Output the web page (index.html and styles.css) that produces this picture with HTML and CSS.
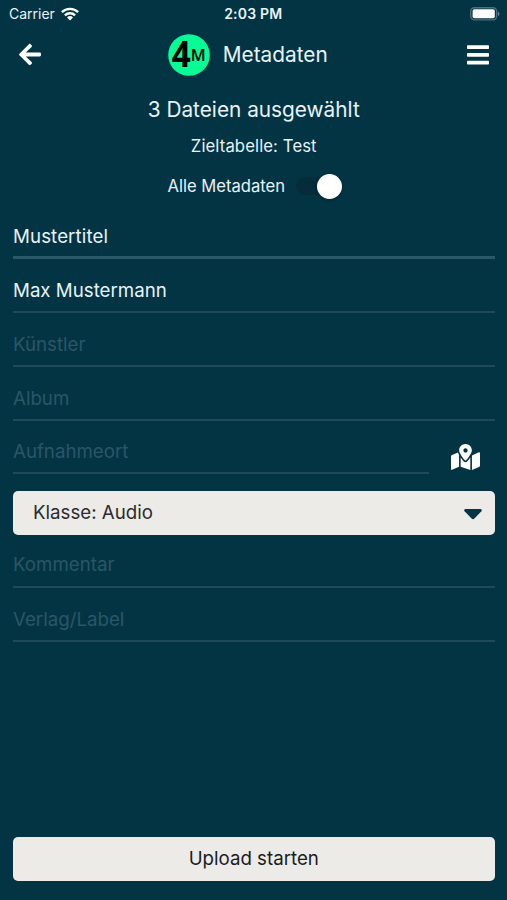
FILE: index.html
```html
<!DOCTYPE html>
<html lang="de">
<head>
<meta charset="utf-8">
<title>Metadaten</title>
<link rel="stylesheet" href="styles.css">
</head>
<body>
<div class="status">
  <div class="carrier"><span>Carrier</span>
    <svg width="18" height="14" viewBox="0 0 18 14"><g fill="none" stroke="#fff" stroke-width="2.4"><path d="M.9 5.2a11.5 11.5 0 0 1 16.2 0"/><path d="M3.9 8.4a7.2 7.2 0 0 1 10.2 0"/></g><path fill="#fff" d="M9 13.6 6 10.5a4.3 4.3 0 0 1 6 0z"/></svg>
  </div>
  <span class="time">2:03 PM</span>
  <svg class="battery" width="31" height="14" viewBox="0 0 31 14"><rect x="1.7" y=".7" width="26" height="12.2" rx="3.8" fill="none" stroke="#4c6f7d" stroke-width="1.4"/><rect x="3.6" y="2.3" width="22.2" height="9" rx="1.8" fill="#fff"/><path d="M29 4.4q3 2.4 0 4.8z" fill="#668692"/></svg>
</div>
<header class="header">
  <svg class="back" width="22" height="25" viewBox="0 0 448 512"><path fill="#fff" d="M257.5 445.1l-22.2 22.2c-9.4 9.4-24.6 9.4-33.9 0L7 273c-9.4-9.4-9.4-24.6 0-33.9L201.4 44.7c9.4-9.4 24.6-9.4 33.9 0l22.2 22.2c9.5 9.5 9.3 25-.4 34.3L136.6 216H424c13.3 0 24 10.7 24 24v32c0 13.3-10.7 24-24 24H136.6l120.5 114.8c9.8 9.3 10 24.8.4 34.3z"/></svg>
  <div class="brand">
    <svg class="logo" width="42" height="42" viewBox="0 0 42 42"><circle cx="21" cy="21" r="20.8" fill="#09fb96"/><text class="four" x="3.8" y="33" textLength="19" lengthAdjust="spacingAndGlyphs">4</text><text class="em" x="22.8" y="27.4" textLength="15" lengthAdjust="spacingAndGlyphs">M</text></svg>
    <h1>Metadaten</h1>
  </div>
  <svg class="menu" width="22" height="20" viewBox="0 0 22 20"><g fill="#fff"><rect width="22" height="3.8" y=".2" rx=".8"/><rect width="22" height="3.8" y="8" rx=".8"/><rect width="22" height="3.8" y="15.8" rx=".8"/></g></svg>
</header>
<main>
  <h2>3 Dateien ausgewählt</h2>
  <p class="target">Zieltabelle: Test</p>
  <div class="toggle-row"><span>Alle Metadaten</span><span class="toggle"><span class="knob"></span></span></div>
  <form class="form">
    <div class="field focused">Mustertitel</div>
    <div class="field filled">Max Mustermann</div>
    <div class="field">Künstler</div>
    <div class="field">Album</div>
    <div class="place">
      <div class="field">Aufnahmeort</div>
      <svg width="29" height="26" viewBox="0 0 576 512"><path fill="#fff" d="M288 0c-69.59 0-126 56.41-126 126 0 56.26 82.35 158.8 113.9 196.02 6.39 7.54 17.82 7.54 24.2 0C331.65 284.8 414 182.26 414 126 414 56.41 357.59 0 288 0zm0 168c-23.2 0-42-18.8-42-42s18.8-42 42-42 42 18.8 42 42-18.8 42-42 42zM20.12 215.95A32.006 32.006 0 0 0 0 245.66v250.32c0 11.32 11.43 19.06 21.94 14.86L160 448V214.92c-8.84-15.98-16.07-31.54-21.25-46.42L20.12 215.95zM288 359.67c-14.07 0-27.38-6.18-36.51-16.96-19.66-23.2-40.57-49.62-59.49-76.72v182l192 64V266c-18.92 27.09-39.82 53.52-59.49 76.72-9.13 10.77-22.44 16.95-36.51 16.95zm266.06-198.51L416 224v288l139.88-55.95A31.996 31.996 0 0 0 576 426.34V176.02c0-11.32-11.43-19.06-21.94-14.86z"/></svg>
    </div>
    <div class="select"><span>Klasse: Audio</span>
      <svg width="18" height="11" viewBox="0 0 18 11"><path fill="#033646" d="M1.5 0h15q2.2.4.9 2.2l-7 7.4q-1.4 1.3-2.8 0l-7-7.4Q-.7.4 1.5 0z"/></svg>
    </div>
    <div class="field after">Kommentar</div>
    <div class="field">Verlag/Label</div>
  </form>
</main>
<div class="upload">Upload starten</div>
</body>
</html>
```
FILE: styles.css
```css
* { box-sizing: border-box; }
body {
  margin: 0;
  width: 507px;
  height: 900px;
  padding: 0 12.5px 19.5px 13px;
  display: flex;
  flex-direction: column;
  background: #033444;
  color: #e8f3f7;
  font-family: Inter, "Liberation Sans", sans-serif;
  font-size: 18.7px;
}
h1, h2, p { margin: 0; font-weight: 400; }
svg { display: block; flex: none; }
.status {
  display: grid;
  grid-template-columns: 1fr auto 1fr;
  align-items: center;
  height: 27px;
  margin: 0 -5px 0 -4px;
  font-size: 14px;
}
.carrier { display: flex; align-items: center; gap: 6px; }
.time { font-weight: 600; letter-spacing: .2px; margin-right: 2px; }
.battery { justify-self: end; }
.header {
  height: 55px;
  display: grid;
  grid-template-columns: 1fr auto 1fr;
  align-items: center;
  padding: 0 6px;
}
.brand { display: flex; align-items: center; gap: 13px; margin-right: 12px; }
.logo { overflow: visible; }
.menu { justify-self: end; }
h1 { font-size: 20.8px; }
.four { font: 700 35px "Open Sans", sans-serif; }
.em { font: 600 16px "Open Sans", sans-serif; }
main { display: flex; flex-direction: column; align-items: center; }
h2 { font-size: 20.8px; line-height: 28px; margin-top: 14px; }
.target { font-size: 16.7px; line-height: 20px; margin-top: 12px; letter-spacing: .1px; }
.toggle-row { display: flex; align-items: center; gap: 11px; height: 26px; margin: 17px -2px 0 0; font-size: 16.6px; }
.toggle {
  width: 46px;
  height: 18px;
  border-radius: 9px;
  display: flex;
  align-items: center;
  justify-content: flex-end;
  background: linear-gradient(90deg, #042c3a 70%, transparent 70%);
}
.knob { width: 25px; height: 25px; border-radius: 50%; background: #fff; box-shadow: 0 1px 3px #0005; flex: none; }
.form { width: 100%; margin-top: 17px; }
.field {
  height: 53.85px;
  padding-top: 20px;
  line-height: 24px;
  border-bottom: 2px solid #20495a;
  color: #2b5666;
}
.focused { height: 43px; padding-top: 9px; border-bottom: 3px solid #295869; color: #e8f3f7; letter-spacing: .1px; }
.filled { color: #e8f3f7; }
.place { display: flex; align-items: center; gap: 22px; }
.place .field { width: 416px; padding-top: 19.5px; }
.place svg { margin-top: 19px; }
.select {
  height: 44px;
  margin-top: 17px;
  padding: 0 13px 1px 20px;
  border-radius: 5px;
  display: flex;
  align-items: center;
  justify-content: space-between;
  background: #edebe7;
  color: #2b2c2e;
}
.select svg { margin-top: 4px; }
.after { height: 52.6px; padding-top: 18px; }
.upload {
  height: 44px;
  margin-top: auto;
  border-radius: 5px;
  display: flex;
  align-items: center;
  justify-content: center;
  background: #edebe7;
  color: #1b1c1d;
}
```
